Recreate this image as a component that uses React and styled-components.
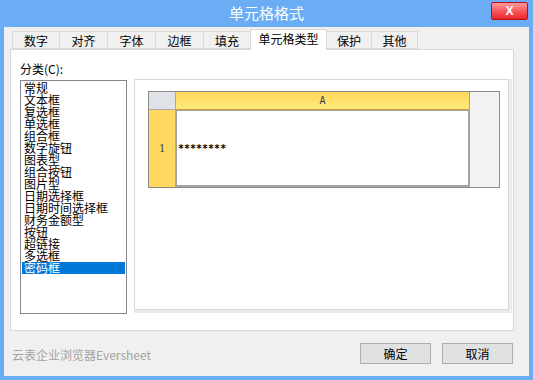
import React from "react";
import styled, { createGlobalStyle } from "styled-components";

const GlobalStyle = createGlobalStyle`
  html, body {
    margin: 0;
    padding: 0;
    width: 533px;
    height: 380px;
    overflow: hidden;
    font-family: "Noto Sans CJK SC", "Liberation Sans", sans-serif;
  }
`;

const Window = styled.div`
  width: 533px;
  height: 380px;
  box-sizing: border-box;
  background: #6badf4;
  padding: 0 4px 4px;
  display: flex;
  flex-direction: column;
`;

const TitleBar = styled.div`
  height: 27px;
  display: grid;
  grid-template-columns: 1fr auto 1fr;
  align-items: center;
`;

const Title = styled.div`
  grid-column: 2;
  color: #fff;
  font-size: 15px;
  line-height: 27px;
  margin-top: -3px;
`;

const CloseButton = styled.div`
  grid-column: 3;
  justify-self: end;
  align-self: start;
  margin-top: 2px;
  margin-right: 1px;
  width: 37px;
  height: 18px;
  box-sizing: border-box;
  border: 1px solid #b3101a;
  border-radius: 2px;
  background: linear-gradient(#ff9a9a, #f7585c 50%, #e8282f);
  color: #fff;
  font-family: "Liberation Sans", sans-serif;
  font-weight: bold;
  font-size: 12px;
  line-height: 16px;
  text-align: center;
`;

const Client = styled.div`
  flex: 1;
  background: #f0f0f0;
  padding: 2px 15px 0 6px;
  display: flex;
  flex-direction: column;
`;

const TabRow = styled.div`
  display: flex;
  align-items: flex-end;
  margin-left: 2px;
  height: 20px;
`;

const Tab = styled.div`
  width: ${(p) => p.$w}px;
  height: ${(p) => (p.$active ? 21 : 18)}px;
  margin-right: -1px;
  margin-bottom: ${(p) => (p.$active ? -1 : 0)}px;
  box-sizing: border-box;
  border: 1px solid #d9d9d9;
  border-bottom: ${(p) => (p.$active ? "none" : "1px solid #d9d9d9")};
  background: ${(p) => (p.$active ? "#fff" : "#f0f0f0")};
  position: relative;
  z-index: ${(p) => (p.$active ? 2 : 1)};
  font-size: 12px;
  line-height: ${(p) => (p.$active ? 18 : 17)}px;
  color: #000;
  text-align: center;
`;

const Panel = styled.div`
  height: 282px;
  box-sizing: border-box;
  background: #fff;
  border: 1px solid #d9d9d9;
  padding: 11px 0 0 9px;
  display: grid;
  grid-template-columns: 107px 375px;
  column-gap: 7px;
  align-items: start;
`;

const LeftColumn = styled.div`
  display: flex;
  flex-direction: column;
`;

const Label = styled.div`
  font-size: 12px;
  line-height: 16px;
  margin-bottom: 3px;
  color: #000;
`;

const ListBox = styled.div`
  height: 234px;
  box-sizing: border-box;
  border: 1px solid #828790;
  padding: 1px;
`;

const ListItem = styled.div`
  height: 12px;
  font-size: 12px;
  line-height: 12px;
  padding-left: 2px;
  white-space: nowrap;
  color: ${(p) => (p.$selected ? "#fff" : "#000")};
  background: ${(p) => (p.$selected ? "#0078d7" : "transparent")};
`;

const Preview = styled.div`
  margin-top: 18px;
  height: 231px;
  box-sizing: border-box;
  border: 1px solid #d9d9d9;
  box-shadow: 3px 0 0 #ebebeb, 0 3px 0 #ebebeb, 3px 3px 0 #ebebeb;
  padding: 11px 8px 0 13px;
`;

const Sheet = styled.div`
  height: 97px;
  box-sizing: border-box;
  border: 1px solid #8c8c8c;
  display: grid;
  grid-template-columns: 27px 294px 1fr;
  grid-template-rows: 18px 1fr;
`;

const Corner = styled.div`
  background: #dfe3e8;
  border-right: 1px solid #a9a9a9;
  border-bottom: 1px solid #a9a9a9;
`;

const ColHeader = styled.div`
  background: linear-gradient(#ffd55a, #ffeb7d);
  border-right: 1px solid #d59b35;
  border-bottom: 1px solid #d59b35;
  color: #2e3e50;
  font-family: "DejaVu Sans Mono", monospace;
  font-size: 10px;
  line-height: 17px;
  text-align: center;
`;

const Filler = styled.div`
  grid-row: 1 / span 2;
  grid-column: 3;
  background: #f3f3f3;
`;

const RowHeader = styled.div`
  background: #ffd95f;
  border-right: 1px solid #a9a9a9;
  color: #2e3e50;
  font-family: "Liberation Serif", serif;
  font-size: 12px;
  display: flex;
  align-items: center;
  justify-content: center;
`;

const Cell = styled.div`
  background: #fff;
  border: 2px solid #a3a3a3;
  border-left-width: 1px;
  border-top-width: 1px;
  display: flex;
  align-items: center;
  padding-left: 1px;
  font-family: "DejaVu Sans Mono", monospace;
  font-weight: bold;
  font-size: 10px;
  color: #000;
`;

const Footer = styled.div`
  flex: 1;
  display: flex;
  align-items: center;
  padding: 0 0 0 2px;
  gap: 11px;
`;

const Brand = styled.div`
  flex: 1;
  font-size: 12px;
  color: #a3a3a3;
  margin-top: 1px;
`;

const Button = styled.div`
  width: 71px;
  height: 21px;
  box-sizing: border-box;
  background: #e1e1e1;
  border: 1px solid #adadad;
  font-size: 12px;
  line-height: 19px;
  text-align: center;
  color: #000;
  margin-right: ${(p) => (p.$last ? 1 : 0)}px;
`;

const tabs = [
  ["数字", 48],
  ["对齐", 49],
  ["字体", 49],
  ["边框", 49],
  ["填充", 48],
  ["单元格类型", 77],
  ["保护", 46],
  ["其他", 47],
];

const types = [
  "常规",
  "文本框",
  "复选框",
  "单选框",
  "组合框",
  "数字旋钮",
  "图表型",
  "组合按钮",
  "图片型",
  "日期选择框",
  "日期时间选择框",
  "财务金额型",
  "按钮",
  "超链接",
  "多选框",
  "密码框",
];

export default function App() {
  return (
    <>
      <GlobalStyle />
      <Window>
        <TitleBar>
          <Title>单元格格式</Title>
          <CloseButton>X</CloseButton>
        </TitleBar>
        <Client>
          <TabRow>
            {tabs.map(([name, w]) => (
              <Tab key={name} $w={w} $active={name === "单元格类型"}>
                {name}
              </Tab>
            ))}
          </TabRow>
          <Panel>
            <LeftColumn>
              <Label>分类(C):</Label>
              <ListBox>
                {types.map((t) => (
                  <ListItem key={t} $selected={t === "密码框"}>
                    {t}
                  </ListItem>
                ))}
              </ListBox>
            </LeftColumn>
            <Preview>
              <Sheet>
                <Corner />
                <ColHeader>A</ColHeader>
                <Filler />
                <RowHeader>1</RowHeader>
                <Cell>********</Cell>
              </Sheet>
            </Preview>
          </Panel>
          <Footer>
            <Brand>云表企业浏览器Eversheet</Brand>
            <Button>确定</Button>
            <Button $last>取消</Button>
          </Footer>
        </Client>
      </Window>
    </>
  );
}
